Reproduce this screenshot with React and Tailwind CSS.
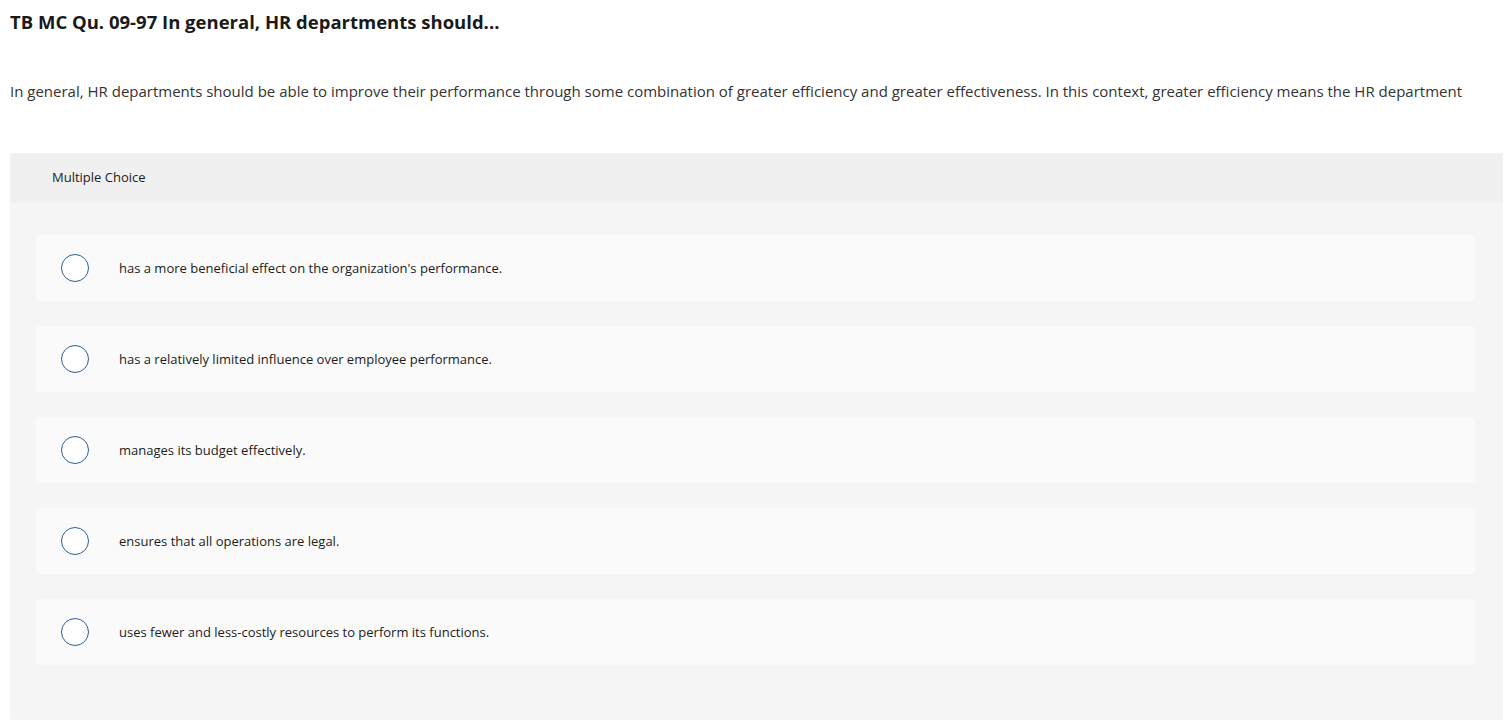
import React from "react";

const options = [
  "has a more beneficial effect on the organization's performance.",
  "has a relatively limited influence over employee performance.",
  "manages its budget effectively.",
  "ensures that all operations are legal.",
  "uses fewer and less-costly resources to perform its functions.",
];

export default function App() {
  return (
    <div className="min-h-screen bg-white text-[#1c1c1c]" style={{ fontFamily: "'Open Sans', Arial, sans-serif" }}>
      <div className="pl-[10px] pr-[3px]">
        <h1 className="pt-[12px] text-[18.5px] leading-[20px] font-bold text-[#1a1a1a]">
          TB MC Qu. 09-97 In general, HR departments should...
        </h1>
        <p className="mt-[48px] text-[15px] leading-[22px] text-[#333]">
          In general, HR departments should be able to improve their performance through some combination of greater efficiency and greater effectiveness. In this context, greater efficiency means the HR department
        </p>
        <div className="mt-[51px] rounded-[3px] bg-[#f5f5f5] overflow-hidden">
          <div className="h-[50px] bg-[#f0f0f0] flex items-center pl-[42px] text-[13px] text-[#222]">
            Multiple Choice
          </div>
          <div className="pt-[32px] pb-[55px] pl-[26px] pr-[28px] flex flex-col gap-[25px]">
            {options.map((o) => (
              <div key={o} className="h-[66px] rounded-[3px] bg-[#fafafa] flex items-center pl-[25px]">
                <span className="w-[28px] h-[28px] rounded-full border-[1.5px] border-[#2b5f94] bg-white shrink-0" />
                <span className="ml-[30px] text-[13px] leading-[18px] text-[#1c1c1c]">{o}</span>
              </div>
            ))}
          </div>
        </div>
      </div>
    </div>
  );
}
